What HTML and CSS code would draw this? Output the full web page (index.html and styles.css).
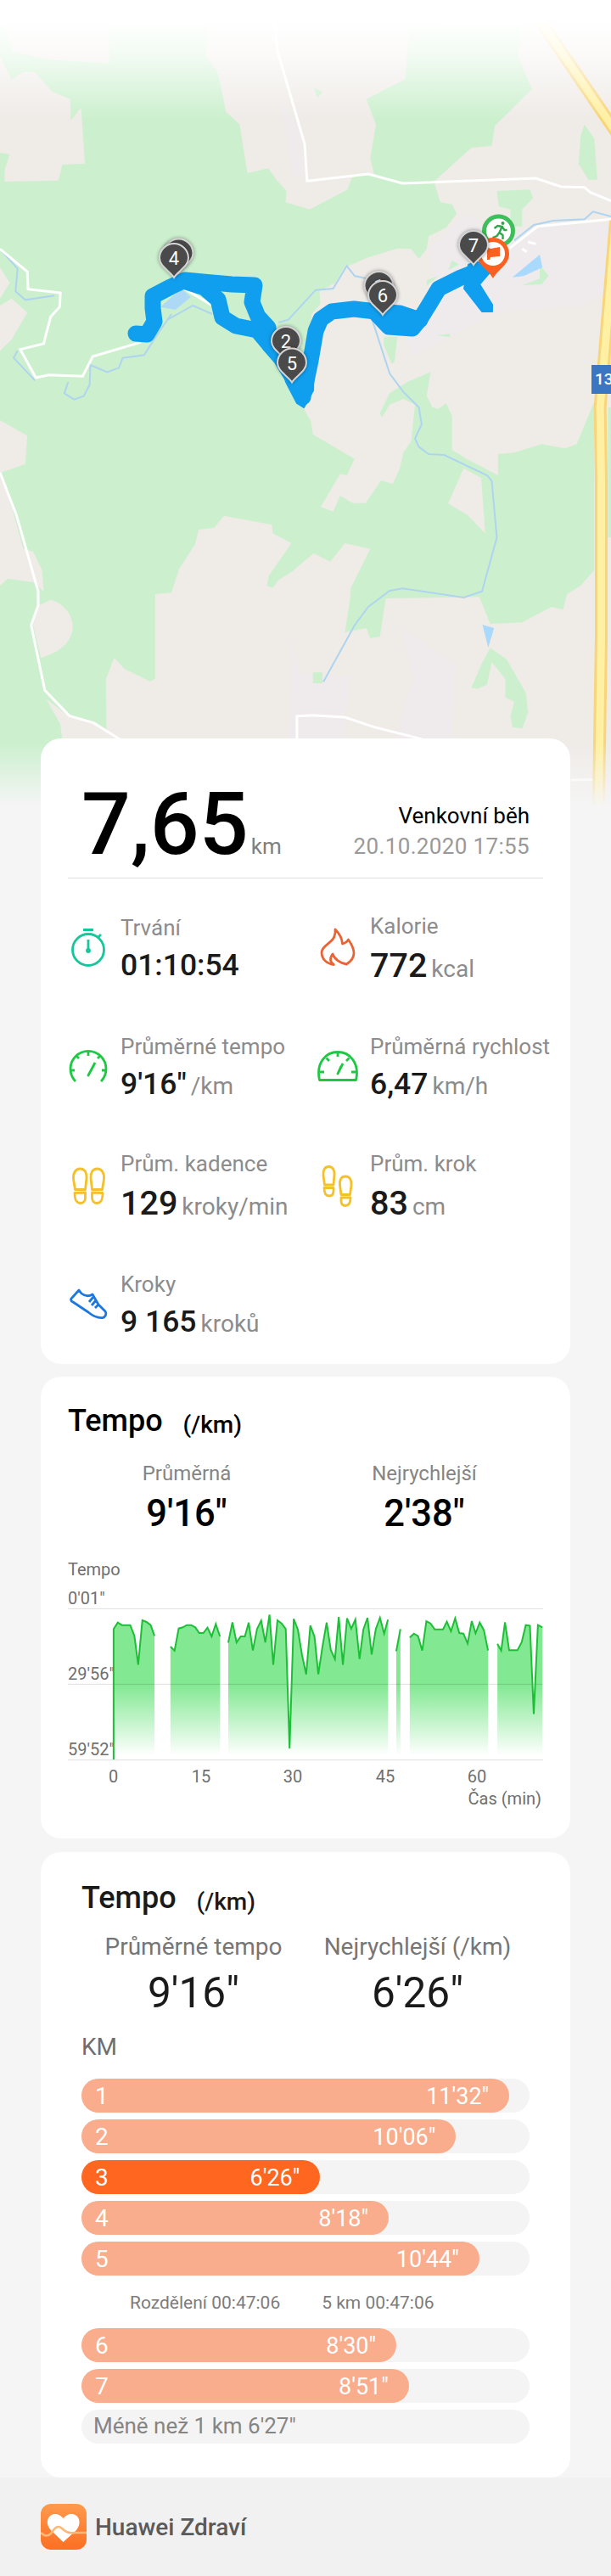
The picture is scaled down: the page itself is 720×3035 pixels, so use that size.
FILE: index.html
```html
<!DOCTYPE html>
<html lang="cs">
<head>
    <meta charset="UTF-8">
    <meta name="viewport" content="width=device-width, initial-scale=1.0">
    <title>Huawei Zdraví</title>
    <link rel="stylesheet" href="styles.css">
</head>
<body>

    <!-- Mapa s trasou -->
    <div class="map">
        <svg class="map-base" viewBox="0 0 1568 2880" preserveAspectRatio="none">
            <rect width="1568" height="2880" fill="#efebe7"/>
            <g fill="#efebed">
                <path d="M1190 760L1310 820 1420 800 1568 790V1010L1500 1080 1300 1100 1250 1120 1060 1260 1040 1200 1130 1100 1100 880Z"/>
                <path d="M1030 2220L1170 2350 1160 2620H1010L1060 2400ZM750 2260L770 2380 900 2390 880 2620H740ZM720 360L770 450 780 620H750Z"/>
            </g>
            <g fill="#ccf0ce">
                <path d="M0 0H530V200L560 260 580 395 615 440 635 612 688 595 712 640 735 675 733 715 795 740 892 670 903 628 945 612 1035 648H1115L1130 715 1160 722 1172 755 1145 805 1100 835 1095 880 1075 915 1055 880 1020 878 945 910 885 945 860 1000 820 1030 822 1075 800 1110 795 1200 780 1445 798 1490 803 1535 910 1622 890 1680 873 1675 823 1792 855 1808 873 1752 905 1778H938L978 1698 1008 1710 1025 1660 1035 1600 1055 1560 1065 1430 1035 1410 1000 1430 980 1475 975 1460 1000 1390 1045 1350 1105 1315 1095 1400 1110 1440 1125 1445 1145 1425 1160 1470V1590L1195 1620 1250 1660 1278 1680V1605L1320 1600 1390 1570 1450 1585 1480 1570 1525 1420V2015L1490 2070 1455 2100 1445 2155 1415 2145 1340 2200 1258 2205 1230 2110 990 2115 975 2250 950 2255 940 2220 885 2235 898 2120 900 2080 950 1940 885 1920 848 1985 805 1955 750 2020 715 2050 700 2078 685 2070 690 2035 748 1920 700 1885 698 1855 575 1823 550 1865 510 1872 500 1925 460 2010 440 2095 398 2100V2400L385 2408 320 2365 293 2325 272 2400 275 2880H0Z"/>
                <path d="M1050 100L1340 60 1330 200 1365 315 1270 445 1262 515 1210 522 1115 640 1035 650 960 615 950 560 965 440 940 350 1040 280Z"/>
                <path d="M1500 440L1525 490 1533 635H1510L1485 580 1490 480ZM1275 675L1360 670 1368 700 1340 740V800H1310V740L1280 730ZM805 310L828 325 815 345Z"/>
                <path d="M1160 920L1178 935 1150 955ZM1385 935L1408 975 1390 1005 1340 1008 1385 985ZM985 1190H1020L1012 1280 1005 1285 985 1220ZM1120 1185L1155 1180V1192ZM1125 975L1095 1010V990Z"/>
                <path d="M1258 2290L1300 2330 1350 2450 1355 2520 1340 2575 1315 2570 1310 2530 1320 2480 1297 2465V2400L1262 2340 1250 2420 1225 2435 1210 2430 1235 2350ZM803 2377H828V2415H803ZM1560 1440H1568V1900H1560Z"/>
            </g>
            <g fill="#efebe7">
                <path d="M0 1670L30 1790 60 1940 85 1950 108 2015 112 2090 85 2058 20 2045 0 2070ZM0 1485L70 1540 65 1640 0 1672Z"/>
                <path d="M130 2120C170 2135 187 2180 187 2220 180 2280 150 2305 105 2325L85 2210 100 2140ZM118 2470L175 2530 240 2555 310 2620H160L155 2560Z"/>
                <path d="M0 200L30 280 60 255H90L135 325 180 350 182 425 208 380 218 578 160 582 150 638 12 642V600L25 545 0 540ZM0 945L25 1000 0 1055ZM30 1055L70 1105 30 1200 0 1240V1080Z"/>
                <path d="M1190 1655L1235 1690 1245 1885 1200 1820 1150 1780ZM0 0H280V225L120 210 30 180Z"/>
            </g>
            <g fill="#a9d9fd">
                <path d="M1385 900L1392 945 1345 975 1315 980ZM1238 2208L1268 2220 1253 2288Z"/>
                <path d="M465 1020L490 1050 450 1095 412 1085Z" fill="#aed9f6"/>
            </g>
            <g class="river">
                <path d="M0 880L45 950 40 1030 65 1060 140 1045M45 1240L35 1265 90 1345M440 1110L400 1190 370 1255 315 1265 305 1300 275 1315 232 1290 230 1360 215 1400 190 1412 165 1390 175 1350"/>
                <path d="M430 1130L495 1080 545 1110M715 1140L740 1130 780 1070 810 1025 855 1020 890 940 910 975 960 990"/>
                <path d="M955 1130L1000 1320 1035 1385 1075 1440 1082 1500 1065 1550 1075 1580 1100 1605 1140 1608 1250 1680 1262 1700 1275 1900 1237 2090 1190 2112 1033 2080 1000 2088 945 2145 910 2210 830 2410"/>
                <path d="M1320 850L1370 795 1420 780 1500 775 1522 748 1568 765"/>
            </g>
            <g class="road">
                <path d="M0 880L70 960 72 1022 155 1035 153 1085 130 1120 112 1215 52 1235 92 1335 125 1325 212 1330 238 1260 360 1210M470 1018L545 1080"/>
                <path d="M700 0L712 180 782 510 788 640 945 615 1033 648 1375 630 1440 660 1500 662 1515 680 1568 710"/>
                <path d="M1568 775L1380 800 1305 880M1340 880L1352 890M1355 855L1375 862"/>
                <path d="M0 1670L42 1820 98 2090V2140L80 2210 115 2440 178 2530 240 2555 310 2615M762 2615V2532L800 2528 885 2535 960 2570 1090 2615M1465 2758L1530 2755"/>
            </g>
            <path class="highway-edge" d="M1370 40L1600 505M1580 780L1540 1440 1543 1700V2250L1536 2860"/>
            <path class="highway" d="M1370 40L1600 505M1580 780L1540 1440 1543 1700V2250L1536 2860"/>
        </svg>
        <div class="map-fade"></div>
        <svg class="map-track" viewBox="0 0 720 960">
            <defs>
                <path id="pin" d="M0 23C-5 15-17 10-17 0A17 17 0 1 1 17 0C17 10 5 15 0 23Z"/>
            </defs>
            <rect x="697" y="430" width="30" height="34" fill="#3b76c3"/>
            <text class="shield" x="701" y="453">13</text>

            <g class="track">
                <path d="M160 393L173 394 182 379 180 363 180 349 201 338 218 330 273 335 300 336 297 356 304 373 316 386 318 407 331 422 348 450 357 468"/>
                <path d="M216 331L241 339 257 353 262 374 278 384 303 389 318 407"/>
                <path d="M358 463L366 425 372 390 378 376 391 367 417 364 443 367 471 369 495 377"/>
                <path d="M443 369L458 385 486 387 495 376 505 360 517 340 543 327 566 318"/>
                <path d="M552 312L562 308 577 321 565 335 580 359V367H568L547 340Z" class="track-fill"/>
                <path d="M325 408L370 425 369 460 358 480 350 475 337 450Z" class="track-fill"/>
            </g>

            <g class="pin">
                <g transform="translate(210.5 298.5)"><use href="#pin"/></g>
                <g transform="translate(205 304)"><use href="#pin"/><text y="8">4</text></g>
                <g transform="translate(337 402)"><use href="#pin"/><text y="8">2</text></g>
                <g transform="translate(344 427.5)"><use href="#pin"/><text y="8">5</text></g>
                <g transform="translate(446.5 337)"><use href="#pin"/><text y="8">1</text></g>
                <g transform="translate(451 348)"><use href="#pin"/><text y="8">6</text></g>
            </g>
            <!-- start -->
            <g transform="translate(587.5 272)">
                <circle r="17" fill="#fff" stroke="#3fbf5b" stroke-width="5"/>
                <circle cx="5" cy="-9" r="2" fill="#2fa84a"/>
                <path d="M-5-3L-1-6 4-5 1 2 5 5 5 10M1 2L-2 6-7 8M4-5L7-1 10-1" fill="none" stroke="#2fa84a" stroke-width="2.4"/>
            </g>
            <!-- cíl -->
            <g transform="translate(581 299)">
                <path d="M0 29C-6 18-19 13-19 0A19 19 0 1 1 19 0C19 13 6 18 0 29Z" fill="#fb6020"/>
                <circle r="14" fill="#fff"/>
                <path d="M-7-8L-3-6 8-8V3L-3 4-4 7H-7Z" fill="#fb6020"/>
            </g>
            <g class="pin"><g transform="translate(558 289)"><use href="#pin"/><text y="8">7</text></g></g>
        </svg>
    </div>

    <!-- Souhrn aktivity -->
    <section class="card summary">
        <div class="summary-head">
            <div class="distance">7,65<span>km</span></div>
            <div class="activity">
                <div class="activity-name">Venkovní běh</div>
                <div class="activity-date">20.10.2020 17:55</div>
            </div>
        </div>
        <div class="stats">
            <div class="stat">
                <svg class="icon teal" viewBox="0 0 48 48"><circle cx="24" cy="27" r="18.5"/><path d="M18 3.5H30M35.5 12.5L39 9M24 15V27"/><circle cx="24" cy="28" r="1.5"/></svg>
                <div class="stat-text">
                    <div class="label">Trvání</div>
                    <div class="value">01:10:54</div>
                </div>
            </div>
            <div class="stat">
                <svg class="icon flame" viewBox="0 0 48 48"><path d="M21 3C25 7 29 12 29.5 20C33 19 35 18 36.4 15C40 20 43 25 43 31C43 37 39 41 34.4 44C27 43 20 38 18 32C14 37 15 42 19.3 44.5C11 43.5 5 38 5 30C5 22 19 18 20 11C21 8 21.5 6 21 3Z"/></svg>
                <div class="stat-text">
                    <div class="label">Kalorie</div>
                    <div class="value big">772<span>kcal</span></div>
                </div>
            </div>
            <div class="stat">
                <svg class="icon green" viewBox="0 0 48 48"><path d="M9 42A21 21 0 1 1 39 42M24 7V12M13 15L9.5 11.5M35 15L38.5 11.5M3 29H8M40 29H45M32 20L24 35L30 24"/></svg>
                <div class="stat-text">
                    <div class="label">Průměrné tempo</div>
                    <div class="value">9'16"<span>/km</span></div>
                </div>
            </div>
            <div class="stat">
                <svg class="icon green" viewBox="0 0 48 48"><path d="M2.5 40.5C-2 20 10 7.5 24 7.5S50 20 45.5 40.5ZM24 8V13M14 18L10.5 14.5M34 18L37.5 14.5M3 31H8M40 31H45M30 21L24 33L28 24"/></svg>
                <div class="stat-text">
                    <div class="label">Průměrná rychlost</div>
                    <div class="value">6,47<span>km/h</span></div>
                </div>
            </div>
            <div class="stat">
                <svg class="icon yellow" viewBox="0 0 48 48">
                    <path d="M8.5 29.5L6.5 17C6 10 9 5 14.5 5S22.5 10 22 16L20.5 29.5ZM8 33.5L20.5 33V39C20.5 43 18 45.5 15 45.5C10 45.5 8 42 8 33.5Z"/>
                    <path d="M40.5 29.5L42.5 17C43 10 40 5 34.5 5S26.5 10 27 16L28.5 29.5ZM41 33.5L28.5 33V39C28.5 43 31 45.5 34 45.5C39 45.5 41 42 41 33.5Z"/>
                </svg>
                <div class="stat-text">
                    <div class="label">Prům. kadence</div>
                    <div class="value big">129<span>kroky/min</span></div>
                </div>
            </div>
            <div class="stat">
                <svg class="icon yellow" viewBox="0 0 48 48">
                    <path d="M8.5 24L7 13C6.5 6 9 2.5 13.5 2.5S20.5 7 20 12L19 24ZM8 27.5H19V31C19 35 17 37 14 37C10 37 8 34 8 27.5Z"/>
                    <path d="M38.5 35.5L40 24.5C40.5 18 38 14 33 14S26 18 26.5 24L28 35.5ZM39 39H28V43C28 46.5 30 48.5 33 48.5C37 48.5 39 46 39 39Z"/>
                </svg>
                <div class="stat-text">
                    <div class="label">Prům. krok</div>
                    <div class="value big">83<span>cm</span></div>
                </div>
            </div>
            <div class="stat">
                <svg class="icon blue" viewBox="0 0 48 48"><path d="M13 8L4 18C3 20 4 21 6 22L24 34C30 39 36 41 41 40.5C44 40 46 36 44 33L36 25L29 13C24 16 20 15 16 12ZM30 16L25 22M33 20L28 26M36 25L32 29"/></svg>
                <div class="stat-text">
                    <div class="label">Kroky</div>
                    <div class="value">9 165<span>kroků</span></div>
                </div>
            </div>
        </div>
    </section>

    <!-- Graf tempa -->
    <section class="card pace">
        <h2>Tempo <small>(/km)</small></h2>
        <div class="pair">
            <div>
                <div class="label">Průměrná</div>
                <div class="pair-value">9'16"</div>
            </div>
            <div>
                <div class="label">Nejrychlejší</div>
                <div class="pair-value">2'38"</div>
            </div>
        </div>
        <svg class="chart" viewBox="80 1830 560 310">
            <defs>
                <linearGradient id="fade" gradientUnits="userSpaceOnUse" x1="0" y1="226" x2="0" y2="761">
                    <stop offset="0" stop-color="#82e892"/>
                    <stop offset="0.5" stop-color="#82e892"/>
                    <stop offset="0.97" stop-color="#82e892" stop-opacity="0"/>
                </linearGradient>
            </defs>
            <g transform="translate(40 1820) scale(0.408163 0.333333)">
                <g fill="url(#fade)">
                    <path d="M230 761V298L242 275 254 284H278L290 322 301 424 313 267 325 273 337 284 348 322V761Z"/>
                    <path d="M394 761V360L406 374 418 296 430 292 441 284H454L466 292 477 312H489L501 293 513 324 525 280 537 324V761Z"/>
                    <path d="M561 761V346L573 274 585 345 597 324H609L620 275 632 374 644 298 656 268 668 345 680 247 691 424 703 267 715 278 727 298 738 720 750 262 762 300 774 390 786 458 798 285 810 325 821 458 833 360 845 275 857 372 869 404 880 255 892 424 904 260 916 297 928 264 940 404 951 300 963 258 975 388 987 298 999 258 1011 314 1022 265V761Z"/>
                    <path d="M1046 761V376L1058 298V761ZM1085 761V328L1097 314 1109 323 1121 374 1133 270 1145 278 1157 299H1181L1192 272 1204 306 1216 260 1228 312 1240 314 1252 349 1264 270 1275 313 1287 275 1299 302 1311 374V761Z"/>
                    <path d="M1338 761V350L1349 374 1360 274 1372 373H1396L1408 345 1420 284 1432 286 1443 598 1455 284 1468 292V761Z"/>
                </g>
                <g class="grid">
                    <path d="M98 226H1470M98 493H1470M98 761H1470"/>
                </g>
                <g class="line">
                    <path d="M230 759V298L242 275 254 284H278L290 322 301 424 313 267 325 273 337 284 348 322"/>
                    <path d="M394 360L406 374 418 296 430 292 441 284H454L466 292 477 312H489L501 293 513 324 525 280 537 324"/>
                    <path d="M561 346L573 274 585 345 597 324H609L620 275 632 374 644 298 656 268 668 345 680 247 691 424 703 267 715 278 727 298 738 720 750 262 762 300 774 390 786 458 798 285 810 325 821 458 833 360 845 275 857 372 869 404 880 255 892 424 904 260 916 297 928 264 940 404 951 300 963 258 975 388 987 298 999 258 1011 314 1022 265"/>
                    <path d="M1046 376L1058 298M1085 328L1097 314 1109 323 1121 374 1133 270 1145 278 1157 299H1181L1192 272 1204 306 1216 260 1228 312 1240 314 1252 349 1264 270 1275 313 1287 275 1299 302 1311 374"/>
                    <path d="M1338 350L1349 374 1360 274 1372 373H1396L1408 345 1420 284 1432 286 1443 598 1455 284 1468 292"/>
                </g>
            </g>
            <g class="axis">
                <text x="80" y="1856">Tempo</text>
                <text x="80" y="1890">0'01"</text>
                <text x="80" y="1979">29'56"</text>
                <text x="80" y="2068">59'52"</text>
                <g text-anchor="middle">
                    <text x="133.5" y="2100">0</text>
                    <text x="237" y="2100">15</text>
                    <text x="345" y="2100">30</text>
                    <text x="454" y="2100">45</text>
                    <text x="562" y="2100">60</text>
                </g>
                <text x="638" y="2126" text-anchor="end">Čas (min)</text>
            </g>
        </svg>
    </section>

    <!-- Tempo po kilometrech -->
    <section class="card splits">
        <h2>Tempo <small>(/km)</small></h2>
        <div class="pair">
            <div>
                <div class="label">Průměrné tempo</div>
                <div class="pair-value">9'16"</div>
            </div>
            <div>
                <div class="label">Nejrychlejší (/km)</div>
                <div class="pair-value">6'26"</div>
            </div>
        </div>
        <div class="km">KM</div>
        <div class="bars">
            <div class="bar"><div class="fill" style="width: 95.5%"><b>1</b><span>11'32"</span></div></div>
            <div class="bar"><div class="fill" style="width: 83.6%"><b>2</b><span>10'06"</span></div></div>
            <div class="bar"><div class="fill best" style="width: 53.3%"><b>3</b><span>6'26"</span></div></div>
            <div class="bar"><div class="fill" style="width: 68.6%"><b>4</b><span>8'18"</span></div></div>
            <div class="bar"><div class="fill" style="width: 88.8%"><b>5</b><span>10'44"</span></div></div>
            <div class="split-note"><span>Rozdělení 00:47:06</span><span>5 km 00:47:06</span></div>
            <div class="bar"><div class="fill" style="width: 70.3%"><b>6</b><span>8'30"</span></div></div>
            <div class="bar"><div class="fill" style="width: 73.1%"><b>7</b><span>8'51"</span></div></div>
            <div class="bar rest">Méně než 1 km 6'27"</div>
        </div>
    </section>

    <footer>
        <svg class="logo" viewBox="0 0 54 54">
            <defs>
                <linearGradient id="logo-bg" x1="0" y1="0" x2="0" y2="1">
                    <stop offset="0" stop-color="#ff9a4d"/>
                    <stop offset="1" stop-color="#fb6f23"/>
                </linearGradient>
            </defs>
            <rect width="54" height="54" rx="12" fill="url(#logo-bg)"/>
            <path d="M26.5 45L12 31C4 22 9 12 17 12C21 12 24 14 26.5 17C29 14 32 12 36 12C45 12 49 22 42 31Z" fill="#fff"/>
            <path d="M0 34C4 38 8 39 12 35C16 29 20 24 25 29C30 34 34 35 40 34H54" fill="none" stroke="#ffb878" stroke-width="2.5"/>
        </svg>
        <span>Huawei Zdraví</span>
    </footer>

</body>
</html>
```
FILE: styles.css
```css
* {
    box-sizing: border-box;
}
body {
    margin: 0;
    width: 720px;
    background: #f5f5f5;
    font-family: Roboto, sans-serif;
    color: #000;
}

/* mapa */
.map {
    position: relative;
    height: 870px;
}
.map-base,
.map-track,
.map-fade {
    position: absolute;
    top: 0;
    left: 0;
    width: 720px;
    height: 960px;
}
.map-fade {
    background: linear-gradient(#fff 0, #fff 25px, rgba(255, 255, 255, 0.75) 65px, rgba(255, 255, 255, 0) 140px, rgba(245, 245, 245, 0) 875px, #f5f5f5 950px);
}
.map-base path {
    vector-effect: non-scaling-stroke;
}
.river {
    fill: none;
    stroke: #afd4f0;
    stroke-width: 2;
}
.road {
    fill: none;
    stroke: #fff;
    stroke-width: 3;
}
.highway-edge {
    fill: none;
    stroke: #f8d47c;
    stroke-width: 15;
}
.highway {
    fill: none;
    stroke: #fff0a3;
    stroke-width: 9;
}
.track {
    fill: none;
    stroke: #109fef;
    stroke-width: 19;
    stroke-linejoin: round;
    stroke-linecap: round;
}
.track .track-fill {
    fill: #109fef;
    stroke-width: 2;
}
.pin use {
    fill: #4a4a4a;
    stroke: #d4d4d4;
    stroke-width: 2;
    filter: drop-shadow(0 0 2px rgba(0, 0, 0, 0.4));
}
.pin text {
    fill: #fff;
    font-size: 22px;
    text-anchor: middle;
}
.shield {
    fill: #fff;
    font-size: 19px;
    font-weight: 500;
}

/* karty */
.card {
    position: relative;
    width: 624px;
    margin: 0 48px 16px;
    background: #fff;
    border-radius: 24px;
}
.label {
    font-size: 26px;
    line-height: 30px;
    color: #8c8c8c;
    white-space: nowrap;
}
h2 {
    height: 42px;
    margin: 0;
    font-size: 36px;
    font-weight: 500;
    line-height: 42px;
}
h2 small {
    position: relative;
    top: 2px;
    margin-left: 15px;
    font-size: 28px;
    font-weight: 500;
    line-height: 1;
}

.summary {
    height: 737px;
    margin-bottom: 15px;
    padding: 0 32px;
}
.summary-head {
    display: flex;
    justify-content: space-between;
    align-items: baseline;
    height: 165px;
    padding: 41px 16px 0;
    border-bottom: 1px solid #dfdfdf;
}
.distance {
    font-size: 102px;
    font-weight: 500;
    line-height: 120px;
    white-space: nowrap;
}
.distance span {
    margin-left: 3px;
    font-size: 26px;
    font-weight: 400;
    color: #808080;
}
.activity {
    display: flex;
    flex-direction: column;
    justify-content: flex-end;
    align-self: flex-start;
    height: 104px;
    text-align: right;
    line-height: 36px;
    font-size: 26px;
}
.activity-name {
    font-size: 26px;
}
.activity-date {
    color: #999;
    letter-spacing: 0.35px;
}
.stats {
    display: grid;
    grid-template-columns: 294px 1fr;
    grid-auto-rows: 140px;
    padding-top: 11px;
}
.stat {
    display: flex;
    align-items: center;
}
.stat-text {
    margin-left: 14px;
    padding-top: 12px;
}
.value {
    font-size: 35.5px;
    font-weight: 500;
    line-height: 59px;
    color: #1a1a1a;
    white-space: nowrap;
}
.value.big {
    font-size: 39.5px;
    line-height: 63px;
}
.value span {
    margin-left: 5px;
    font-size: 28px;
    font-weight: 400;
    line-height: 30px;
    color: #8c8c8c;
}
.icon {
    flex: none;
    width: 48px;
    height: 48px;
    overflow: visible;
    fill: none;
    stroke-width: 2.8;
    stroke-linejoin: round;
}
.teal { stroke: #15c79b; }
.flame { stroke: #ea6333; }
.green { stroke: #1fc843; }
.yellow { stroke: #f4c02c; }
.blue { stroke: #1a78e0; }

/* dvojice hodnot */
.pair {
    display: grid;
    grid-template-columns: 1fr 1fr;
    text-align: center;
}

.pace {
    height: 544px;
    padding: 31px 32px 0;
}
.pace .pair {
    margin-top: 26px;
}
.pace .label {
    font-size: 24px;
    color: #858585;
}
.pace .pair-value {
    font-size: 43.5px;
    font-weight: 500;
    line-height: 66px;
}
.chart {
    display: block;
    width: 560px;
    height: 310px;
    margin-top: 13px;
}
.chart path {
    vector-effect: non-scaling-stroke;
}
.grid {
    stroke: rgba(0, 0, 0, 0.13);
    stroke-width: 1;
}
.line {
    fill: none;
    stroke: #1dbf37;
    stroke-width: 2;
}
.axis {
    font-size: 20px;
    fill: #6f6f6f;
}

.splits {
    height: 737px;
    margin-bottom: 0;
    padding: 33px 48px 0;
    color: #1a1a1a;
}
.splits .pair {
    margin-top: 20px;
}
.splits .label {
    font-size: 28px;
    line-height: 34px;
    color: #767676;
}
.splits .pair-value {
    font-size: 49.5px;
    line-height: 74px;
}
.km {
    margin-top: 4px;
    font-size: 28px;
    line-height: 46px;
    color: #6e6e6e;
}
.bars {
    display: flex;
    flex-direction: column;
    gap: 8px;
    margin-top: 14px;
}
.bar {
    height: 40px;
    border-radius: 20px;
    background: #f4f4f4;
}
.fill {
    display: flex;
    justify-content: space-between;
    height: 40px;
    padding: 0 24px 0 16px;
    border-radius: 20px;
    background: #f9ad8c;
    color: #fff;
    font-size: 27px;
    line-height: 42px;
}
.fill b {
    font-size: 28px;
    font-weight: 400;
}
.fill.best {
    background: #ff661f;
}
.split-note {
    display: flex;
    gap: 49px;
    height: 50px;
    margin-bottom: -4px;
    padding-left: 57px;
    font-size: 21px;
    line-height: 48px;
    color: #7c7c7c;
    white-space: nowrap;
}
.bar.rest {
    padding-left: 14px;
    font-size: 26px;
    line-height: 38px;
    color: #858585;
}

footer {
    display: flex;
    align-items: center;
    height: 116px;
    padding: 0 48px;
    background: #f1f1f1;
    font-size: 28px;
    font-weight: 500;
    color: #5a5a5a;
}
.logo {
    width: 54px;
    height: 54px;
    margin-right: 10px;
}
```
